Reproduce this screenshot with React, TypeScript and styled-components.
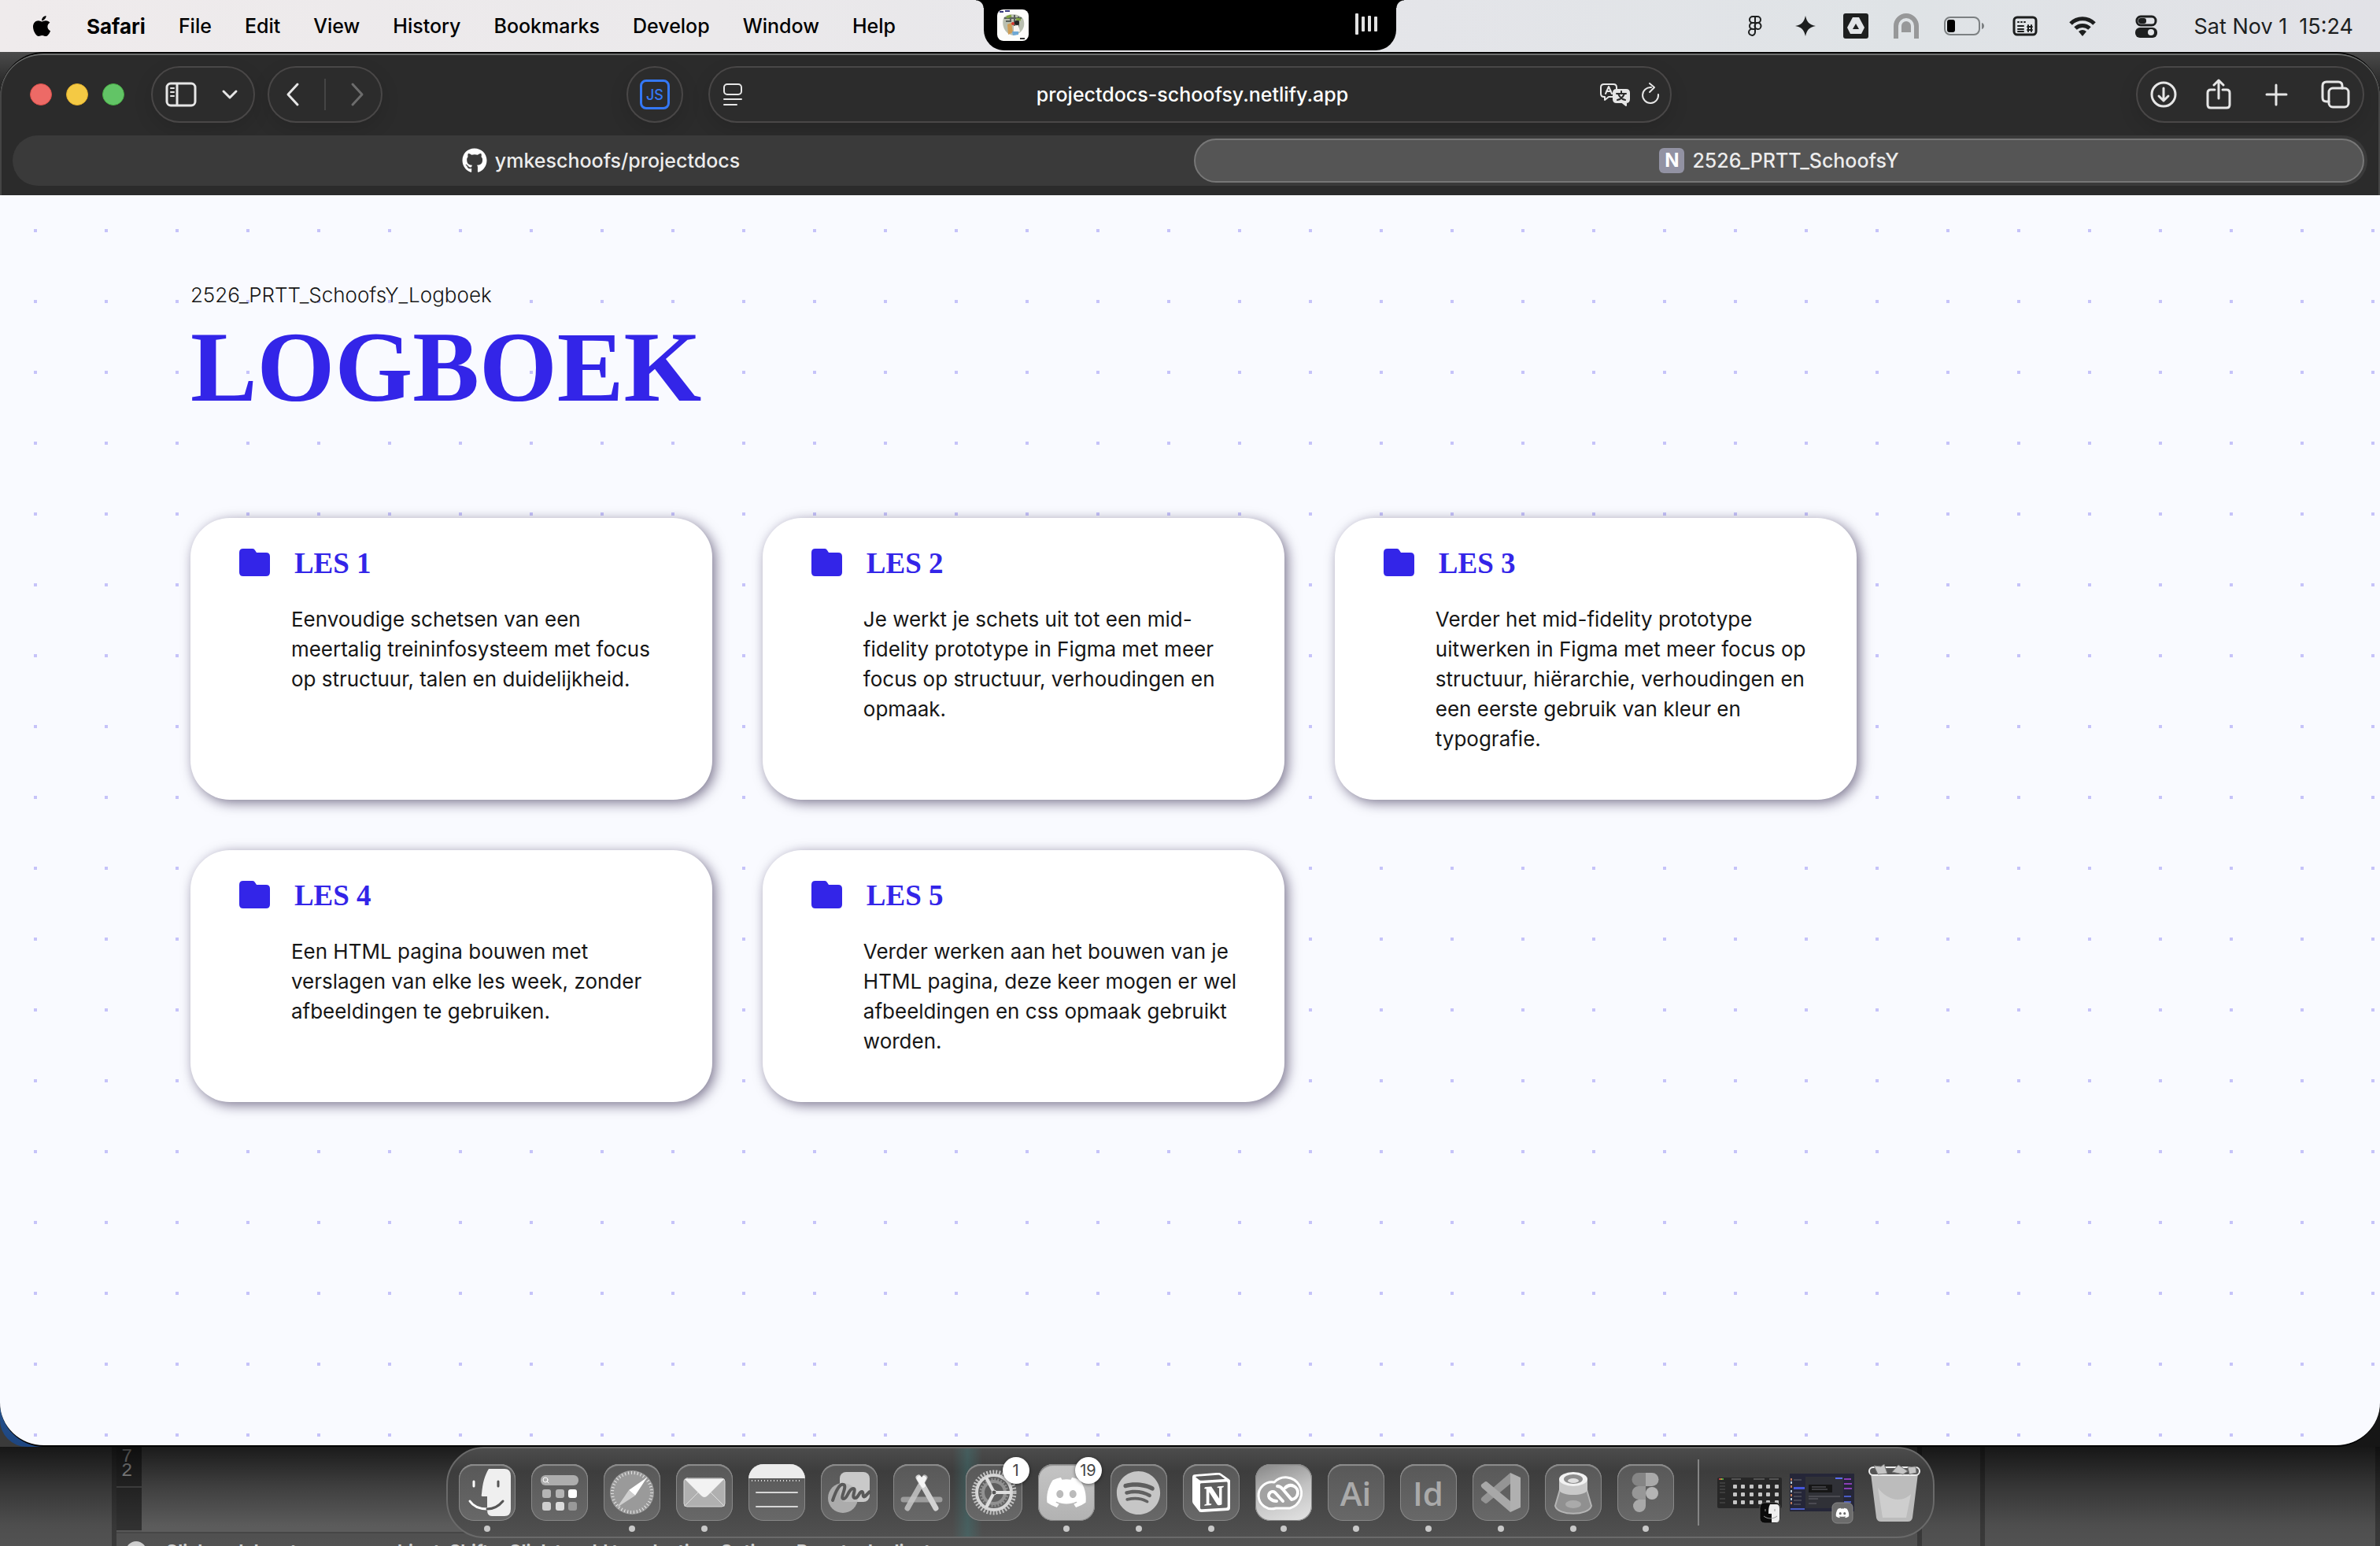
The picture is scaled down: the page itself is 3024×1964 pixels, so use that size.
import React from 'react';
import styled, { createGlobalStyle } from 'styled-components';
import { FaApple, FaGithub, FaDiscord, FaSpotify } from 'react-icons/fa';
import { SiNotion } from 'react-icons/si';

const sans = `Inter, "Liberation Sans", sans-serif`;
const serif = `"Liberation Serif", serif`;
const accent = '#3325e8';

const GlobalStyle = createGlobalStyle`
  *, *::before, *::after { box-sizing: border-box; }
  body { margin: 0; background: #3a3a3a; font-family: ${sans}; }
  button, input { font: inherit; color: inherit; border: 0; padding: 0; background: none; }
  h1, h2, p { margin: 0; }
  svg { display: block; flex: none; }
`;

const Screen = styled.div`
  min-height: 100vh;
  display: flex;
  flex-direction: column;
  overflow: hidden;
`;

/* ---------- menu bar ---------- */

const MenuBar = styled.header`
  display: grid;
  grid-template-columns: minmax(0, 1fr) 524px minmax(0, 1fr);
  height: 66px;
  background: linear-gradient(90deg, #efebec 0%, #ebe9eb 30%, #e4e5e9 60%, #dfe3e6 80%, #e2e2e7 100%);
  color: #000;
  font-size: 25px;
  font-weight: 500;
`;

const MenuList = styled.nav`
  display: flex;
  align-items: center;
  gap: 42px;
  padding-left: 38px;
  white-space: nowrap;
`;

const MenuItem = styled.button<{ $strong?: boolean }>`
  font-size: ${(p) => (p.$strong ? 26 : 25)}px;
  font-weight: ${(p) => (p.$strong ? 700 : 500)};
`;

const Notch = styled.div`
  position: relative;
  display: flex;
  align-items: center;
  justify-content: space-between;
  height: 64px;
  padding: 0 24px 0 17px;
  background: #000;
  border-radius: 0 0 26px 26px;
  &::before, &::after {
    content: '';
    position: absolute;
    top: 0;
    width: 10px;
    height: 10px;
  }
  &::before { right: 100%; background: radial-gradient(circle at 0 100%, transparent 9px, #000 10px); }
  &::after { left: 100%; background: radial-gradient(circle at 100% 100%, transparent 9px, #000 10px); }
`;

const StatusList = styled.div`
  display: flex;
  align-items: center;
  justify-content: flex-end;
  gap: 32px;
  padding-right: 34px;
  color: #1d1f1f;
  white-space: pre;
`;

const Clock = styled.time`
  font-size: 27px;
  font-weight: 400;
`;

/* ---------- browser window ---------- */

const WindowBack = styled.div`
  flex: 1;
  display: flex;
  background:
    linear-gradient(#27548f, #1d4580) left bottom / 60px 60px no-repeat,
    linear-gradient(#4b4b4b, #1a1a1a 60px, #161616);
  border-bottom-left-radius: 34px;
`;

const Window = styled.main`
  flex: 1;
  display: flex;
  flex-direction: column;
  overflow: hidden;
  border-top: 2px solid #050505;
  border-bottom: 2px solid #000;
  border-radius: 56px;
  background: #2b2b2b;
`;

const Toolbar = styled.div`
  display: flex;
  flex-direction: column;
  gap: 16px;
  padding: 16px 16px 12px;
  border-radius: 54px 54px 0 0;
  box-shadow: inset 0 2px 0 #6d6f6e, inset 2px 0 0 #454545, inset -2px 0 0 #454545;
  color: #e6e6e6;
`;

const ControlRow = styled.div`
  display: grid;
  grid-template-columns: minmax(0, 1fr) minmax(0, 1224px) minmax(0, 1fr);
  gap: 32px;
  height: 72px;
`;

const RowSide = styled.div<{ $end?: boolean }>`
  display: flex;
  align-items: center;
  gap: 16px;
  justify-content: ${(p) => (p.$end ? 'flex-end' : 'flex-start')};
  padding: ${(p) => (p.$end ? '0 4px 0 0' : '0 0 0 22px')};
`;

const Lights = styled.div`
  display: flex;
  gap: 18px;
  margin-right: 18px;
`;

const Light = styled.button<{ $fill: string; $edge: string }>`
  width: 28px;
  height: 28px;
  border-radius: 50%;
  background: ${(p) => p.$fill};
  border: 1px solid ${(p) => p.$edge};
`;

const Pill = styled.div<{ $gap?: number; $push?: boolean }>`
  display: flex;
  align-items: center;
  justify-content: center;
  gap: ${(p) => p.$gap ?? 0}px;
  height: 72px;
  min-width: 72px;
  padding: 0 ${(p) => (p.$push ? 14 : 16)}px;
  margin-left: ${(p) => (p.$push ? 'auto' : '0')};
  border: 2px solid #494747;
  border-radius: 36px;
  background: #2c2c2c;
  box-shadow: 0 8px 24px rgba(0, 0, 0, 0.12);
`;

const IconButton = styled.button<{ $dim?: boolean }>`
  display: flex;
  color: ${(p) => (p.$dim ? '#6c6c6c' : 'inherit')};
`;

const Divider = styled.span`
  width: 2px;
  height: 40px;
  background: #454545;
`;

const ScriptBadge = styled.button`
  flex: none;
  width: 38px;
  height: 38px;
  border: 3px solid #3478f6;
  border-radius: 8px;
  color: #3478f6;
  font-size: 18px;
  font-weight: 500;
`;

const AddressBar = styled(Pill).attrs({ as: 'form' })`
  gap: 12px;
  padding: 0 12px 0 16px;
`;

const Address = styled.input`
  flex: 1;
  min-width: 0;
  padding-left: 54px;
  text-align: center;
  color: #fff;
  font-size: 25px;
  font-weight: 500;
`;

const TabStrip = styled.div`
  display: grid;
  grid-template-columns: 1fr 1fr;
  gap: 10px;
  height: 64px;
  padding: 4px;
  border-radius: 32px;
  background: #3a3a3a;
`;

const Tab = styled.button<{ $active?: boolean }>`
  display: flex;
  align-items: center;
  justify-content: center;
  gap: 10px;
  border-radius: 28px;
  border: 2px solid ${(p) => (p.$active ? '#777' : 'transparent')};
  background: ${(p) => (p.$active ? '#555' : 'transparent')};
  color: #ececec;
  font-size: 25px;
  font-weight: 500;
`;

const Favicon = styled.span`
  width: 32px;
  height: 32px;
  border-radius: 6px;
  background: #9292a3;
  color: #fff;
  font-size: 24px;
  font-weight: 700;
  line-height: 32px;
  text-align: center;
`;

/* ---------- page ---------- */

const Page = styled.div`
  flex: 1;
  padding: 108px 22% 80px 8%;
  background: radial-gradient(circle closest-side, #c6c3f9 5%, transparent 5%) 0 0 / 90px 90px, #f9faff;
  color: #161616;
`;

const Crumb = styled.p`
  font-size: 26px;
  font-weight: 300;
  line-height: 38px;
`;

const PageTitle = styled.h1`
  margin-bottom: 120px;
  color: ${accent};
  font-family: ${serif};
  font-size: 127px;
  font-weight: 700;
  line-height: 144px;
`;

const Lessons = styled.section`
  display: grid;
  grid-template-columns: repeat(3, minmax(0, 1fr));
  gap: 64px;
`;

const Card = styled.a`
  display: block;
  padding: 38px 60px 58px 62px;
  border-radius: 50px;
  background: #fff;
  box-shadow: 4px 4px 16px rgba(20, 10, 50, 0.54);
  color: inherit;
  text-decoration: none;
`;

const CardHead = styled.div`
  display: flex;
  align-items: center;
  gap: 30px;
  height: 40px;
  margin-bottom: 32px;
`;

const CardTitle = styled.h2`
  color: ${accent};
  font-family: ${serif};
  font-size: 37px;
  font-weight: 700;
  line-height: 40px;
`;

const CardText = styled.p`
  padding-left: 66px;
  font-size: 26px;
  line-height: 38px;
`;

/* ---------- desktop and dock ---------- */

const Desktop = styled.footer`
  display: grid;
  height: 126px;
  background: #565656;
  overflow: hidden;
  & > * { grid-area: 1 / 1; }
`;

const Backdrop = styled.div`
  position: relative;
  display: flex;
  height: 126px;
  &::after {
    content: '';
    position: absolute;
    inset: 0;
    background: linear-gradient(rgba(0, 0, 0, 0.72), rgba(0, 0, 0, 0.35) 50px, rgba(0, 0, 0, 0.05) 100px, transparent);
  }
`;

const Side = styled.div<{ $width: number }>`
  width: ${(p) => p.$width}px;
  background: #525252;
  border-right: 6px solid #3a3a3a;
`;

const Workspace = styled.div`
  flex: 1;
  display: flex;
  flex-direction: column;
  background: #606060;
`;

const CanvasRow = styled.div`
  height: 108px;
  flex: none;
`;

const Ruler = styled.div`
  width: 32px;
  height: 108px;
  padding: 4px 6px;
  background: repeating-linear-gradient(#333 0 50px, #5a5a5a 50px 52px, #333 52px 56px);
  color: #d5d5d5;
  font-family: "Liberation Mono", monospace;
  font-size: 24px;
  line-height: 18px;
`;

const HintBar = styled.div`
  display: flex;
  gap: 24px;
  height: 18px;
  padding: 10px 12px 0;
  border-top: 2px solid #484848;
  background: #525252;
  color: #cfcfcf;
  overflow: hidden;
  white-space: nowrap;
  font-size: 22px;
  font-weight: 700;
  line-height: 24px;
`;

const Dock = styled.nav`
  z-index: 1;
  justify-self: center;
  display: flex;
  gap: 20px;
  height: 116px;
  padding: 20px 18px 0 14px;
  border: 2px solid #6a6a6a;
  border-radius: 48px;
  background:
    linear-gradient(90deg, transparent 34%, rgba(60, 130, 130, 0.35) 35%, transparent 36%),
    linear-gradient(#4c4c4c, #3d3d3d 30px, #505050 100%);
`;

const DockItem = styled.div<{ $running?: boolean }>`
  position: relative;
  display: flex;
  flex-direction: column;
  align-items: center;
  gap: 6px;
  &::after {
    content: '';
    width: 8px;
    height: 8px;
    border-radius: 50%;
    background: ${(p) => (p.$running ? '#c8c8c8' : 'transparent')};
  }
`;

const AppIcon = styled.button<{ $bg?: string }>`
  display: flex;
  align-items: center;
  justify-content: center;
  width: 72px;
  height: 72px;
  border-radius: 19px;
  overflow: hidden;
  background: ${(p) => p.$bg ?? 'linear-gradient(#585858, #686868)'};
  box-shadow: inset 0 0 0 1px #888, inset 0 2px 1px #949494;
  color: #c6c6c6;
`;

const Monogram = styled.span`
  color: #aaa;
  font-family: "Open Sans", sans-serif;
  font-size: 42px;
  font-weight: 600;
`;

const Badge = styled.span`
  position: absolute;
  top: -9px;
  right: -9px;
  width: 34px;
  height: 34px;
  border-radius: 50%;
  background: #fff;
  color: #444;
  font-size: 20px;
  line-height: 34px;
  text-align: center;
  box-shadow: 0 1px 4px rgba(0, 0, 0, 0.5);
`;

const DockDivider = styled.span`
  width: 2px;
  height: 84px;
  margin: -6px 3px 0 10px;
  background: #858585;
`;

const Minimized = styled.button`
  display: flex;
  justify-content: center;
  width: 82px;
  height: 80px;
  margin-right: -10px;
`;

/* ---------- drawings ---------- */

type StrokeProps = { w: number; h: number; sw?: number; children: React.ReactNode };
const Line = ({ w, h, sw = 3, children }: StrokeProps) => (
  <svg width={w} height={h} viewBox={`0 0 ${w} ${h}`} fill="none" stroke="currentColor" strokeWidth={sw} strokeLinecap="round" strokeLinejoin="round">
    {children}
  </svg>
);

const AlbumArt = () => (
  <svg width="40" height="40" viewBox="0 0 40 40">
    <rect width="40" height="40" rx="8" fill="#fdfdfb" />
    <path d="M8 11C11 5 28 4 33 12C37 22 31 31 21 33C11 32 5 22 8 11Z" fill="#b9bfb0" />
    <path d="M9 11h22M11 15h6M22 7v22M27 9v17M17 8v8" stroke="#59605b" strokeWidth="2" />
    <path d="M13 19l5-2 2 12-6 3z" fill="#cf9d55" />
    <path d="M12 10l6-2M24 12l6 1" stroke="#7fa23f" strokeWidth="3" />
    <circle cx="20" cy="18" r="2" fill="#d3352c" />
    <circle cx="25" cy="17" r="3" fill="#222" />
    <path d="M21 21l6-1 2 8-8 2z" fill="#f6f3ee" />
    <path d="M19 28l8 0 0 4-7 1z" fill="#6fa9d6" />
    <path d="M3 3h5M10 2h6" stroke="#35377e" strokeWidth="2" />
    <path d="M29 37h6" stroke="#333" strokeWidth="2" />
  </svg>
);

const Bars = () => (
  <svg width="28" height="32" viewBox="0 0 28 32" fill="#e2e2e2">
    <rect y="1" width="4" height="27" rx="1" /><rect x="8" y="5" width="4" height="19" rx="1" />
    <rect x="16" y="4" width="4" height="20" rx="1" /><rect x="24" y="5" width="4" height="19" rx="1" />
  </svg>
);

const StatusIcons = () => (
  <>
    <Line w={32} h={32}><path d="M16 4h-3a4 4 0 0 0 0 8h3zM16 4h3a4 4 0 0 1 0 8h-3zM16 12h-3a4 4 0 0 0 0 8h3zM20 12a4 4 0 1 1-1 8a4 4 0 0 1 1-8zM16 20h-3a4 4 0 1 0 3 4z" strokeWidth="2" /></Line>
    <svg width="32" height="32" viewBox="0 0 32 32" fill="currentColor"><path d="M16 3C18 11 20 14 29 16C20 18 18 21 16 29C14 21 12 18 3 16C12 14 14 11 16 3Z" /></svg>
    <svg width="32" height="32" viewBox="0 0 32 32"><rect width="32" height="32" rx="3" fill="currentColor" /><path d="M12 5h8l7 13-4 8H9l-4-8z" fill="#e2e5e8" /><path d="M16 13l4 7h-8z" fill="currentColor" /></svg>
    <svg width="32" height="32" viewBox="0 0 32 32" fill="#979899"><path d="M0 32V16a16 16 0 0 1 32 0v16h-6V16a10 10 0 0 0-20 0v16z" /><path d="M10 24v-8a6 6 0 0 1 12 0v8z" /></svg>
    <svg width="51" height="26" viewBox="0 0 51 26"><rect x="1" y="2" width="44" height="22" rx="7" fill="none" stroke="#7c8082" strokeWidth="2" /><rect x="4" y="5" width="10" height="16" rx="3" fill="#000" /><path d="M48 9c4 1 4 7 0 8z" fill="#7c8082" /></svg>
    <Line w={40} h={28}><rect x="6" y="3" width="28" height="22" rx="4" /><path d="M11 9h1M15 9h1M19 9h1M11 14h7M11 18h7M11 21h7" strokeWidth="2" /><path d="M23 15h6M23 19h6M24 13v8M28 13v8" strokeWidth="2" /></Line>
    <svg width="42" height="32" viewBox="0 0 42 32" fill="none" stroke="currentColor" strokeWidth="5"><path d="M6 13a21 21 0 0 1 30 0M12 19a13 13 0 0 1 18 0" /><path d="M21 29l-5-6a8 8 0 0 1 10 0z" fill="currentColor" stroke="none" /></svg>
    <svg width="56" height="32" viewBox="0 0 56 32"><rect x="16" y="4" width="24" height="11" rx="5" fill="none" stroke="currentColor" strokeWidth="3" /><rect x="18" y="6" width="10" height="7" rx="3" fill="currentColor" /><rect x="14" y="18" width="28" height="13" rx="6" fill="currentColor" /><circle cx="34" cy="24" r="4" fill="#e2e4e7" /></svg>
  </>
);

const Folder = () => (
  <svg width="40" height="38" viewBox="0 0 40 38" fill={accent}>
    <path d="M5 0h12q2 0 3 2l2 3h12q5 0 5 5v20q0 5-5 5H5q-5 0-5-5V5q0-5 5-5z" />
  </svg>
);

const art = (children: React.ReactNode) => (
  <svg width="72" height="72" viewBox="0 0 72 72" fill="none" strokeLinecap="round" strokeLinejoin="round">{children}</svg>
);

const FinderArt = art(<>
  <path d="M38 6h20q8 0 8 9v42q0 9-8 9H42q-6 0-6-8V41h-6q-2 0-1-3c1-14 4-24 9-32z" fill="#efefef" />
  <path d="M14 47c4 6 12 10 22 10" stroke="#fff" strokeWidth="3" /><path d="M36 57c8 0 15-4 20-10" stroke="#555" strokeWidth="3" />
  <path d="M19 22v6" stroke="#fff" strokeWidth="3" /><path d="M50 22v6" stroke="#555" strokeWidth="3" />
</>);

const LaunchArt = art(<>
  <rect x="12" y="14" width="48" height="13" rx="6" fill="#adadad" /><circle cx="18" cy="20" r="3" stroke="#fff" strokeWidth="1" /><path d="M20 22l2 2" stroke="#fff" />
  {[[14, 32, '#b5b5b5'], [31, 32, '#b5b5b5'], [47, 32, '#fff'], [14, 48, '#cfcfcf'], [31, 48, '#dcdcdc'], [47, 48, '#999']].map(([x, y, f]) => (
    <rect key={`${x}-${y}`} x={x} y={y} width="11" height="11" rx="3" fill={String(f)} />
  ))}
</>);

const SafariArt = art(<>
  <circle cx="36" cy="36" r="28" fill="#9a9a9a" /><circle cx="36" cy="36" r="25" stroke="#e8e8e8" strokeWidth="4" strokeDasharray="1 3" strokeLinecap="butt" />
  <path d="M55 17L40 40l-8-7z" fill="#fff" /><path d="M17 55l15-22 8 7z" fill="#cfcfcf" />
</>);

const MailArt = art(<>
  <rect x="10" y="18" width="52" height="36" rx="4" fill="#b0b0b0" /><path d="M11 53l17-17M61 53L44 36" stroke="#ddd" />
  <path d="M11 19h50L40 40q-4 4-8 0z" fill="#f2f2f2" /><rect x="10" y="18" width="52" height="36" rx="4" stroke="#d8d8d8" />
</>);

const NotesArt = art(<>
  <path d="M0 0h72v18H0z" fill="#ececec" /><path d="M4 21h64" stroke="#ddd" strokeWidth="2" strokeDasharray="1 3" strokeLinecap="butt" />
  <path d="M10 36h52M10 54h52" stroke="#d6d6d6" strokeWidth="2" />
</>);

const FreeformArt = art(<>
  <rect x="24" y="10" width="38" height="38" rx="8" fill="#c9c9c9" /><circle cx="28" cy="43" r="19" fill="#b9b9b9" opacity=".85" />
  <path d="M15 46c4-12 9-22 14-20c5 3-6 18 0 18c5 0 6-13 12-13c5 0-3 11 2 12c5 1 5-8 9-8c3 0 0 8 4 6l6-6" stroke="#595959" strokeWidth="4" />
</>);

const StoreArt = art(<>
  <path d="M13 45h46" stroke="#9c9c9c" strokeWidth="7" /><path d="M32 17l22 39" stroke="#d2d2d2" strokeWidth="7" />
  <path d="M40 17L18 56" stroke="#c5c5c5" strokeWidth="7" opacity=".85" /><path d="M33 18l5 9M39 18l-3 6" stroke="#f5f5f5" strokeWidth="6" />
</>);

const SettingsArt = art(<g strokeLinecap="butt">
  <circle cx="36" cy="36" r="26" stroke="#c2c2c2" strokeWidth="5" strokeDasharray="2 2" /><circle cx="36" cy="36" r="22" stroke="#d6d6d6" strokeWidth="4" />
  <circle cx="36" cy="36" r="17" stroke="#8e8e8e" strokeWidth="3" strokeDasharray="2 2" /><circle cx="36" cy="36" r="14" stroke="#929292" strokeWidth="4" />
  <path d="M36 36h21M36 36L26 17M36 36L26 55" stroke="#dedede" strokeWidth="4" /><circle cx="36" cy="36" r="3" fill="#555" stroke="#ddd" />
</g>);

const CreativeArt = art(<>
  <path d="M26 56a17 17 0 1 1-2-33a20 20 0 1 1 20 33z" fill="#a2a2a2" stroke="#fff" strokeWidth="3" />
  <path d="M35 47l-10-11a5 5 0 0 0-6 8q3 3 8 3" stroke="#fff" strokeWidth="4" />
  <path d="M28 28q4 0 7 4l11 13a9 9 0 0 0 3-17q-6-3-11 2" stroke="#fff" strokeWidth="4" />
</>);

const CodeArt = art(<>
  <path d="M48 11l13 6v38l-13 6z" fill="#b0b0b0" /><path d="M48 11v14L19 49q-2 2-4 0l-4-3q-1-2 1-4z" fill="#949494" />
  <path d="M48 61V47L19 23q-2-2-4 0l-4 3q-1 2 1 4z" fill="#a8a8a8" />
</>);

const LoupeArt = art(<>
  <path d="M20 29L13 53c3 13 43 13 46 0L52 29z" fill="#909090" stroke="#b5b5b5" strokeWidth="2" /><ellipse cx="36" cy="51" rx="10" ry="5" fill="#aaa" />
  <path d="M18 19v14c3 8 33 8 36 0V19z" fill="#c9c9c9" /><ellipse cx="36" cy="19" rx="18" ry="9" fill="#f2f2f2" /><ellipse cx="36" cy="19" rx="12" ry="6" fill="#8d8d8d" /><ellipse cx="36" cy="21" rx="7" ry="3" fill="#e0e0e0" />
</>);

const FigmaArt = art(<>
  <path d="M36 11v17H27a8 8 0 0 1 0-17z" fill="#858585" /><path d="M36 11h8a8 8 0 0 1 0 17h-8z" fill="#a9a9a9" />
  <path d="M36 28v17H27a8 8 0 0 1 0-17z" fill="#979797" /><circle cx="44" cy="37" r="8" fill="#b4b4b4" /><path d="M36 45v8a8 8 0 1 1-9-8z" fill="#a9a9a9" />
</>);

const MiniFinder = () => (
  <svg width="82" height="80" viewBox="0 0 82 80">
    <rect y="17" width="82" height="39" rx="2" fill="#272727" />
    <circle cx="3" cy="19" r="1" fill="#e55" /><circle cx="5" cy="19" r="1" fill="#eb4" /><circle cx="7" cy="19" r="1" fill="#5c5" />
    <path d="M18 19h12M46 19h14M66 19h12" stroke="#555" strokeWidth="2" />
    {[24, 28, 32, 36, 44, 49].map((y) => <path key={y} d={`M3 ${y}h7`} stroke="#555" />)}
    {[26, 36, 46].map((y) => [20, 30, 41, 52, 62, 73].map((x) => <rect key={`${x}-${y}`} x={x} y={y} width="5" height="5" rx="1" fill="#c4c4c4" />))}
    <rect x="54" y="49" width="26" height="26" rx="6" fill="#0b0b0b" stroke="#555" />
    <path d="M67 51h8q4 0 4 5v13q0 5-4 5h-6v-11h-4c0-5 0-8 2-12z" fill="#eee" />
    <path d="M59 66c5 4 12 4 17 0M61 57v3M73 57v3" stroke="#999" strokeWidth="1" fill="none" />
  </svg>
);

const MiniChat = () => (
  <svg width="82" height="80" viewBox="0 0 82 80">
    <rect y="12" width="82" height="48" fill="#252638" /><rect x="20" y="16" width="48" height="40" fill="#303137" />
    {[18, 22, 27, 33, 38, 43, 48].map((y, i) => <rect key={y} x="1" y={y} width="2" height="3" fill={i % 2 ? '#b7c8d5' : '#c07a59'} />)}
    <rect x="5" y="29" width="14" height="3" fill="#4656d8" /><rect x="58" y="17" width="9" height="2" fill="#5a6bee" />
    <rect x="24" y="26" width="30" height="10" fill="#161616" />
    <path d="M28 29h18M28 32h20M24 41h40M24 44h12M24 50h10M5 20h10M5 36h10M5 41h10M5 46h10M5 51h9" stroke="#66676f" />
    <path d="M69 19h9M69 25h10M69 31h10" stroke="#8a3fb5" strokeWidth="2" /><path d="M69 41h9M69 48h9M1 57h18" stroke="#4a5cc4" strokeWidth="2" />
    <rect x="54" y="49" width="26" height="26" rx="6" fill="#6c6c6c" stroke="#888" />
    <FaDiscord x={58} y={53} size={18} color="#fff" />
  </svg>
);

const Trash = () => (
  <svg width="66" height="74" viewBox="0 0 66 74">
    <path d="M3 12l7 56q1 5 6 5h34q5 0 6-5l7-56z" fill="#bcbcbc" /><path d="M12 30l6 38h30l6-30c-12 12-30 8-42-8z" fill="#cecece" />
    <rect x="1" y="4" width="64" height="10" rx="5" fill="#555" stroke="#eee" strokeWidth="2" />
    <path d="M7 2l9 1 4-3 4 12-12 1zM30 10l8-9 12 8-6 4zM50 4l10-1 1 8-9 2z" fill="#c5c5c5" stroke="#777" />
  </svg>
);

/* ---------- data ---------- */

const menus = ['File', 'Edit', 'View', 'History', 'Bookmarks', 'Develop', 'Window', 'Help'];

const lessons = [
  { title: 'LES 1', text: 'Eenvoudige schetsen van een meertalig treininfosysteem met focus op structuur, talen en duidelijkheid.' },
  { title: 'LES 2', text: 'Je werkt je schets uit tot een mid-fidelity prototype in Figma met meer focus op structuur, verhoudingen en opmaak.' },
  { title: 'LES 3', text: 'Verder het mid-fidelity prototype uitwerken in Figma met meer focus op structuur, hiërarchie, verhoudingen en een eerste gebruik van kleur en typografie.' },
  { title: 'LES 4', text: 'Een HTML pagina bouwen met verslagen van elke les week, zonder afbeeldingen te gebruiken.' },
  { title: 'LES 5', text: 'Verder werken aan het bouwen van je HTML pagina, deze keer mogen er wel afbeeldingen en css opmaak gebruikt worden.' },
];

type DockApp = { name: string; icon: React.ReactNode; running?: boolean; badge?: number; bg?: string };
const apps: DockApp[] = [
  { name: 'Finder', icon: FinderArt, running: true },
  { name: 'Apps', icon: LaunchArt },
  { name: 'Safari', icon: SafariArt, running: true },
  { name: 'Mail', icon: MailArt, running: true },
  { name: 'Notes', icon: NotesArt },
  { name: 'Freeform', icon: FreeformArt },
  { name: 'App Store', icon: StoreArt },
  { name: 'System Settings', icon: SettingsArt, badge: 1 },
  { name: 'Discord', icon: <FaDiscord size={54} color="#fff" />, running: true, badge: 19, bg: 'linear-gradient(#c4c4c4, #b2b2b2)' },
  { name: 'Spotify', icon: <FaSpotify size={57} />, running: true },
  { name: 'Notion', icon: <SiNotion size={50} color="#fff" />, running: true },
  { name: 'Creative Cloud', icon: CreativeArt, running: true, bg: 'linear-gradient(160deg, #858585, #c2c2c2 50%, #e4e4e4)' },
  { name: 'Illustrator', icon: <Monogram>Ai</Monogram>, running: true },
  { name: 'InDesign', icon: <Monogram>Id</Monogram>, running: true },
  { name: 'Visual Studio Code', icon: CodeArt, running: true },
  { name: 'Preview', icon: LoupeArt, running: true },
  { name: 'Figma', icon: FigmaArt, running: true },
];

export default function App() {
  return (
    <Screen>
      <GlobalStyle />
      <MenuBar>
        <MenuList aria-label="Menu bar">
          <FaApple size={30} />
          <MenuItem $strong>Safari</MenuItem>
          {menus.map((m) => <MenuItem key={m}>{m}</MenuItem>)}
        </MenuList>
        <Notch><AlbumArt /><Bars /></Notch>
        <StatusList><StatusIcons /><Clock>Sat Nov 1  15:24</Clock></StatusList>
      </MenuBar>

      <WindowBack>
        <Window>
          <Toolbar>
            <ControlRow>
              <RowSide>
                <Lights>
                  <Light $fill="#ed6a66" $edge="#d94f4a" aria-label="Close" />
                  <Light $fill="#f4c944" $edge="#dfae2c" aria-label="Minimize" />
                  <Light $fill="#62c466" $edge="#49ad45" aria-label="Zoom" />
                </Lights>
                <Pill $gap={28}>
                  <IconButton aria-label="Sidebar">
                    <Line w={40} h={32}><rect x="2" y="2" width="36" height="28" rx="5" /><path d="M15 3v26" /><path d="M7 8h4M7 13h4M7 18h4" strokeWidth="2" /></Line>
                  </IconButton>
                  <IconButton aria-label="Tab groups"><Line w={28} h={20}><path d="M6 6l8 8 8-8" /></Line></IconButton>
                </Pill>
                <Pill $gap={26}>
                  <IconButton aria-label="Back"><Line w={28} h={32}><path d="M20 3L8 16l12 13" /></Line></IconButton>
                  <Divider />
                  <IconButton $dim aria-label="Forward"><Line w={28} h={32}><path d="M8 3l12 13L8 29" /></Line></IconButton>
                </Pill>
                <Pill $push><ScriptBadge>JS</ScriptBadge></Pill>
              </RowSide>
              <AddressBar>
                <IconButton type="button" aria-label="Reader">
                  <Line w={26} h={30} sw={2}><rect x="2" y="2" width="22" height="13" rx="4" /><path d="M2 21h22M2 28h16" /></Line>
                </IconButton>
                <Address aria-label="Address" defaultValue="projectdocs-schoofsy.netlify.app" />
                <IconButton type="button" aria-label="Translate">
                  <Line w={40} h={30} sw={2}>
                    <path d="M18 18h-6l-5 4v-4H6q-4 0-4-4V6q0-4 4-4h12q4 0 4 4v2" /><path d="M8 14l4-9 4 9M9 11h6" />
                    <path d="M22 9h12q4 0 4 4v8q0 4-4 4v4l-5-4h-7q-4 0-4-4v-8q0-4 4-4z" fill="currentColor" /><path d="M28 11v3M22 14h12M24 14q3 7 9 8M32 14q-3 7-9 8" stroke="#2c2c2c" />
                  </Line>
                </IconButton>
                <IconButton type="button" aria-label="Reload">
                  <Line w={26} h={32} sw={2}><path d="M14 7a10 10 0 1 0 9 9" /><path d="M12 2l6 5-6 6" /></Line>
                </IconButton>
              </AddressBar>
              <RowSide $end>
                <Pill $gap={36}>
                  <IconButton aria-label="Downloads"><Line w={34} h={36}><circle cx="17" cy="18" r="15" /><path d="M17 10v16M11 20l6 6 6-6" /></Line></IconButton>
                  <IconButton aria-label="Share"><Line w={34} h={40}><path d="M12 14H7q-4 0-4 4v15q0 4 4 4h20q4 0 4-4V18q0-4-4-4h-5M17 25V3M11 8l6-6 6 6" /></Line></IconButton>
                  <IconButton aria-label="New tab"><Line w={40} h={36}><path d="M20 6v25M8 18h25" /></Line></IconButton>
                  <IconButton aria-label="Tab overview"><Line w={38} h={38}><rect x="11" y="11" width="25" height="24" rx="5" /><path d="M11 28H8q-5 0-5-5V8q0-5 5-5h15q5 0 5 5v3" /></Line></IconButton>
                </Pill>
              </RowSide>
            </ControlRow>
            <TabStrip>
              <Tab><FaGithub size={32} color="#fff" />ymkeschoofs/projectdocs</Tab>
              <Tab $active><Favicon>N</Favicon>2526_PRTT_SchoofsY</Tab>
            </TabStrip>
          </Toolbar>

          <Page>
            <Crumb>2526_PRTT_SchoofsY_Logboek</Crumb>
            <PageTitle>LOGBOEK</PageTitle>
            <Lessons>
              {lessons.map((l) => (
                <Card key={l.title} href="#">
                  <CardHead><Folder /><CardTitle>{l.title}</CardTitle></CardHead>
                  <CardText>{l.text}</CardText>
                </Card>
              ))}
            </Lessons>
          </Page>
        </Window>
      </WindowBack>

      <Desktop>
        <Backdrop>
          <Side $width={148} />
          <Workspace>
            <CanvasRow><Ruler>7<br />2</Ruler></CanvasRow>
            <HintBar>
              <svg width="26" height="26" viewBox="0 0 26 26"><circle cx="13" cy="13" r="10" fill="none" stroke="#cfcfcf" strokeWidth="6" /></svg>
              <span>Click and drag to move an object. Shift + Click to add to selection. Option + Drag to duplicate</span>
            </HintBar>
          </Workspace>
          <Side $width={6} />
          <Side $width={80} />
          <Side $width={502} />
        </Backdrop>
        <Dock aria-label="Dock">
          {apps.map((a) => (
            <DockItem key={a.name} $running={a.running}>
              <AppIcon aria-label={a.name} $bg={a.bg}>{a.icon}</AppIcon>
              {a.badge && <Badge>{a.badge}</Badge>}
            </DockItem>
          ))}
          <DockDivider />
          <Minimized aria-label="Finder window"><MiniFinder /></Minimized>
          <Minimized aria-label="Discord window"><MiniChat /></Minimized>
          <Minimized aria-label="Trash"><Trash /></Minimized>
        </Dock>
      </Desktop>
    </Screen>
  );
}
